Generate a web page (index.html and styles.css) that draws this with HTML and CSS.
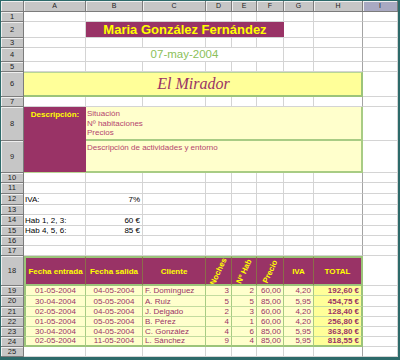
FILE: index.html
```html
<!DOCTYPE html>
<html lang="es">
<head>
<meta charset="utf-8">
<title>El Mirador</title>
<link rel="stylesheet" href="styles.css">
</head>
<body>
<div class="frame">
<div class="sheet">
  <div class="corner"></div>
  <div class="ch">A</div><div class="ch">B</div><div class="ch">C</div><div class="ch">D</div><div class="ch">E</div><div class="ch">F</div><div class="ch">G</div><div class="ch">H</div><div class="ch sel">I</div>

  <div class="rh">1</div>
  <div class="c"></div><div class="c"></div><div class="c"></div><div class="c"></div><div class="c"></div><div class="c"></div><div class="c"></div><div class="c hr"></div><div class="c"></div>

  <div class="rh">2</div>
  <div class="c"></div><div class="title">Maria González Fernández</div><div class="c"></div><div class="c hr"></div><div class="c"></div>

  <div class="rh">3</div>
  <div class="c"></div><div class="c"></div><div class="c"></div><div class="c"></div><div class="c"></div><div class="c"></div><div class="c"></div><div class="c hr"></div><div class="c"></div>

  <div class="rh">4</div>
  <div class="c"></div><div class="date">07-may-2004</div><div class="c"></div><div class="c hr"></div><div class="c"></div>

  <div class="rh">5</div>
  <div class="c"></div><div class="c"></div><div class="c"></div><div class="c"></div><div class="c"></div><div class="c"></div><div class="c"></div><div class="c hr"></div><div class="c"></div>

  <div class="rh">6</div>
  <div class="banner">El Mirador</div><div class="c"></div>

  <div class="rh">7</div>
  <div class="c"></div><div class="c"></div><div class="c"></div><div class="c"></div><div class="c"></div><div class="c"></div><div class="c"></div><div class="c hr"></div><div class="c"></div>

  <div class="rh">8</div>
  <div class="desc">Descripción:</div>
  <div class="note first"><span>Situación</span><span>Nº habitaciones</span><span>Precios</span></div>
  <div class="c"></div>

  <div class="rh">9</div>
  <div class="note"><span>Descripción de actividades y entorno</span></div>
  <div class="c"></div>

  <div class="rh">10</div>
  <div class="c"></div><div class="c"></div><div class="c"></div><div class="c"></div><div class="c"></div><div class="c"></div><div class="c"></div><div class="c hr"></div><div class="c"></div>

  <div class="rh">11</div>
  <div class="c"></div><div class="c"></div><div class="c"></div><div class="c"></div><div class="c"></div><div class="c"></div><div class="c"></div><div class="c hr"></div><div class="c"></div>

  <div class="rh">12</div>
  <div class="c txt">IVA:</div><div class="c num">7%</div><div class="c"></div><div class="c"></div><div class="c"></div><div class="c"></div><div class="c"></div><div class="c hr"></div><div class="c"></div>

  <div class="rh">13</div>
  <div class="c"></div><div class="c"></div><div class="c"></div><div class="c"></div><div class="c"></div><div class="c"></div><div class="c"></div><div class="c hr"></div><div class="c"></div>

  <div class="rh">14</div>
  <div class="c txt">Hab 1, 2, 3:</div><div class="c num">60 €</div><div class="c"></div><div class="c"></div><div class="c"></div><div class="c"></div><div class="c"></div><div class="c hr"></div><div class="c"></div>

  <div class="rh">15</div>
  <div class="c txt">Hab 4, 5, 6:</div><div class="c num">85 €</div><div class="c"></div><div class="c"></div><div class="c"></div><div class="c"></div><div class="c"></div><div class="c hr"></div><div class="c"></div>

  <div class="rh">16</div>
  <div class="c"></div><div class="c"></div><div class="c"></div><div class="c"></div><div class="c"></div><div class="c"></div><div class="c"></div><div class="c hr"></div><div class="c"></div>

  <div class="rh">17</div>
  <div class="c"></div><div class="c"></div><div class="c"></div><div class="c"></div><div class="c"></div><div class="c"></div><div class="c"></div><div class="c hr"></div><div class="c"></div>

  <div class="rh">18</div>
  <div class="th first">Fecha entrada</div><div class="th">Fecha salida</div><div class="th">Cliente</div>
  <div class="th rot"><span>Noches</span></div><div class="th rot"><span>Nº Hab</span></div><div class="th rot"><span>Precio</span></div>
  <div class="th">IVA</div><div class="th last">TOTAL</div><div class="c"></div>

  <div class="rh">19</div>
  <div class="td first ctr">01-05-2004</div><div class="td ctr">04-05-2004</div><div class="td name">F. Domínguez</div><div class="td">3</div><div class="td">2</div><div class="td">60,00</div><div class="td">4,20</div><div class="td tot">192,60 €</div><div class="c"></div>

  <div class="rh">20</div>
  <div class="td first ctr">30-04-2004</div><div class="td ctr">05-05-2004</div><div class="td name">A. Ruiz</div><div class="td">5</div><div class="td">5</div><div class="td">85,00</div><div class="td">5,95</div><div class="td tot">454,75 €</div><div class="c"></div>

  <div class="rh">21</div>
  <div class="td first ctr">02-05-2004</div><div class="td ctr">04-05-2004</div><div class="td name">J. Delgado</div><div class="td">2</div><div class="td">3</div><div class="td">60,00</div><div class="td">4,20</div><div class="td tot">128,40 €</div><div class="c"></div>

  <div class="rh">22</div>
  <div class="td first ctr">01-05-2004</div><div class="td ctr">05-05-2004</div><div class="td name">B. Pérez</div><div class="td">4</div><div class="td">1</div><div class="td">60,00</div><div class="td">4,20</div><div class="td tot">256,80 €</div><div class="c"></div>

  <div class="rh">23</div>
  <div class="td first ctr">30-04-2004</div><div class="td ctr">04-05-2004</div><div class="td name">C. González</div><div class="td">4</div><div class="td">6</div><div class="td">85,00</div><div class="td">5,95</div><div class="td tot">363,80 €</div><div class="c"></div>

  <div class="rh">24</div>
  <div class="td first ctr end">02-05-2004</div><div class="td ctr end">11-05-2004</div><div class="td name end">L. Sánchez</div><div class="td end">9</div><div class="td end">4</div><div class="td end">85,00</div><div class="td end">5,95</div><div class="td tot end">818,55 €</div><div class="c"></div>

  <div class="rh">25</div>
  <div class="c"></div><div class="c"></div><div class="c"></div><div class="c"></div><div class="c"></div><div class="c"></div><div class="c"></div><div class="c hr"></div><div class="c"></div>
</div>
</div>
</body>
</html>
```

FILE: styles.css
```css
* { box-sizing: border-box; margin: 0; padding: 0; }

html, body {
  background: #2d6a6a;
}

body {
  margin: 0;
  font-family: "Liberation Sans", Arial, sans-serif;
}

.frame {
  width: 400px;
  height: 360px;
  padding: 1px 2px 3px 1px;
  background: #2d6a6a;
}

.sheet {
  display: grid;
  grid-template-columns: 23px 62px 57px 63px 26px 25px 27px 30px 49px 35px;
  grid-template-rows: 11px 10px 16px 10px 14px 10px 25px 10px 34px 32px 10px 11px 11px 10px 11px 10px 10px 10px 30px 10px 11px 10px 10px 10px 10px 10px;
  background: #fff;
  font-size: 8px;
  line-height: 9px;
  overflow: hidden;
}

.sheet > div {
  min-width: 0;
  overflow: hidden;
  white-space: nowrap;
  display: flex;
}

/* headers */
.corner, .ch, .rh {
  background: #c6c6c6;
  border-right: 1px solid #7c7c7c;
  border-bottom: 1px solid #7c7c7c;
  box-shadow: inset 1px 1px 0 #efefef;
  color: #1e1e1e;
  justify-content: center;
  align-items: center;
}
.ch { font-size: 7px; line-height: 8px; }
.ch.sel { background: #a9a9c2; }
.rh { font-size: 7.5px; line-height: 8px; }

/* plain cells */
.c {
  background: #fff;
  border-right: 1px solid #d4d4d4;
  border-bottom: 1px solid #d4d4d4;
  align-items: flex-end;
  color: #000;
}
.c.hr { border-right-color: #a4a4a4; }
.txt { padding-left: 1px; }
.num { justify-content: flex-end; padding-right: 2px; }

/* title */
.title {
  grid-column: span 5;
  background: #993366;
  color: #ffff00;
  font-weight: bold;
  font-size: 13px;
  line-height: 15px;
  justify-content: center;
  align-items: center;
  border-bottom: 1px solid #d4d4d4;
}

.date {
  grid-column: span 5;
  color: #8cbf5a;
  font-size: 11.5px;
  line-height: 13px;
  justify-content: center;
  align-items: center;
  border-bottom: 1px solid #d4d4d4;
  border-right: 1px solid #d4d4d4;
}

.banner {
  grid-column: span 8;
  background: #ffff99;
  border-top: 1px solid #b9d694;
  border-bottom: 2px solid #9cc47a;
  border-right: 2px solid #9cc47a;
  color: #993366;
  font-family: "Liberation Serif", "Times New Roman", serif;
  font-style: italic;
  font-size: 16px;
  line-height: 18px;
  justify-content: center;
  align-items: center;
  padding-left: 2px;
}

.desc {
  grid-row: span 2;
  background: #993366;
  color: #ffff00;
  font-weight: bold;
  justify-content: center;
  align-items: flex-start;
  padding-top: 3px;
  border-bottom: 1px solid #b9d694;
}

.note {
  grid-column: span 7;
  background: #ffffcc;
  color: #b4456e;
  flex-direction: column;
  align-items: flex-start;
  padding: 2px 0 0 1px;
  border-right: 2px solid #a8cc84;
  border-bottom: 2px solid #a8cc84;
  line-height: 9.6px;
}
.note.first { border-top: 0; }

/* table */
.th {
  background: #993366;
  color: #ffff00;
  font-weight: bold;
  justify-content: center;
  align-items: center;
  border-top: 2px solid #9cc47a;
  border-right: 1px solid #8b6c4a;
  border-bottom: 2px solid #9cc47a;
  position: relative;
}
.th.first { border-left: 2px solid #9cc47a; }
.th.last { border-right: 2px solid #9cc47a; }
.th.rot span {
  display: block;
  transform: rotate(-65deg);
  transform-origin: center;
}

.td {
  background: #ffffcc;
  color: #993366;
  border-right: 1px solid #a8cc84;
  border-bottom: 1px solid #c3dc9f;
  align-items: flex-end;
  justify-content: flex-end;
  padding-right: 2px;
}
.td.first { border-left: 2px solid #9cc47a; }
.td.ctr { justify-content: center; padding-right: 0; }
.td.name { justify-content: flex-start; padding-left: 2px; }
.td.tot {
  background: #ffff99;
  font-weight: bold;
  border-right: 2px solid #9cc47a;
}
.td.end { border-bottom: 2px solid #9cc47a; }
```
